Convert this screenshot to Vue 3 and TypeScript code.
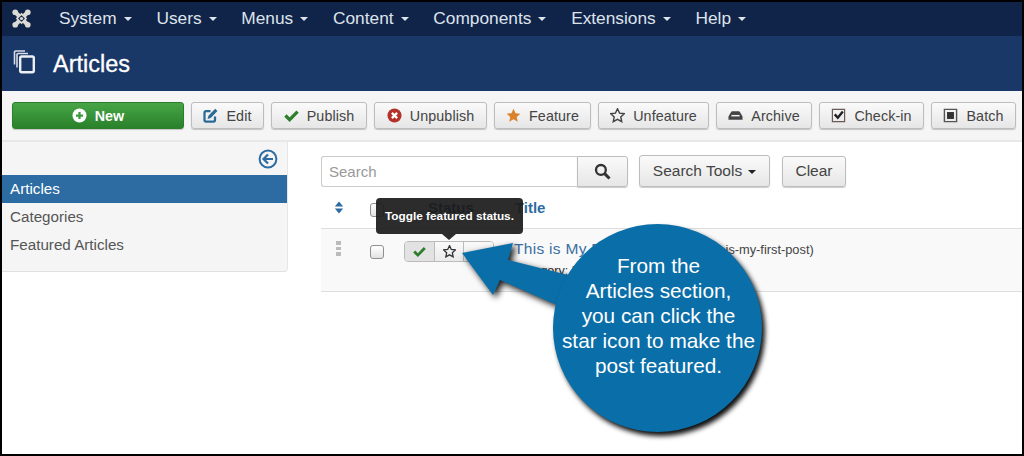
<script setup lang="ts">
interface Shape { d: string; fill?: string; stroke?: string; sw?: number }
interface Btn { label: string; w: number; cls?: string; shapes: Shape[] }

const menus: string[] = ['System', 'Users', 'Menus', 'Content', 'Components', 'Extensions', 'Help']

const star = 'M8 .8l2.2 4.7 5.1.6-3.8 3.5 1 5L8 12.1l-4.5 2.5 1-5L.7 6.1l5.1-.6z'

const buttons: Btn[] = [
  { label: 'New', w: 172, cls: 'primary', shapes: [
    { d: 'M8 .5a7.5 7.5 0 1 0 0 15A7.5 7.5 0 0 0 8 .5z', fill: '#fff' },
    { d: 'M8 4.2v7.6M4.2 8h7.6', stroke: '#3a9a3a', sw: 2.4 },
  ] },
  { label: 'Edit', w: 73, shapes: [
    { d: 'M8 3.2H3.2A1.6 1.6 0 0 0 1.6 4.8v8a1.6 1.6 0 0 0 1.6 1.6h8a1.6 1.6 0 0 0 1.6-1.6V9', stroke: '#2a6a96', sw: 2.4 },
    { d: 'M13 .8l2.4 2.4L8.2 10.6l-3.4 1 1-3.4z', fill: '#2a6a96' },
  ] },
  { label: 'Publish', w: 96, shapes: [
    { d: 'M1.5 8L6 12.5 14.5 3.8', stroke: '#2c7d2c', sw: 3.4 },
  ] },
  { label: 'Unpublish', w: 113, shapes: [
    { d: 'M8 .5a7.5 7.5 0 1 0 0 15A7.5 7.5 0 0 0 8 .5z', fill: '#b3312a' },
    { d: 'M5.2 5.2l5.6 5.6M10.8 5.2l-5.6 5.6', stroke: '#fff', sw: 2.4 },
  ] },
  { label: 'Feature', w: 97, shapes: [{ d: star, fill: '#d9822b' }] },
  { label: 'Unfeature', w: 111, shapes: [{ d: star, stroke: '#444', sw: 1.5, fill: 'none' }] },
  { label: 'Archive', w: 96, shapes: [
    { d: 'M5 3.5h6c1 0 1.5.4 2 1.2L15.5 9v3.5h-15V9L3 4.7c.5-.8 1-1.2 2-1.2z', fill: '#444' },
    { d: 'M3.6 8.2h8.8', stroke: '#efefef', sw: 1.6 },
  ] },
  { label: 'Check-in', w: 105, shapes: [
    { d: 'M1.5 1.5h13v13h-13z', stroke: '#6a5a55', sw: 1.3, fill: 'none' },
    { d: 'M4 6.8L7.3 10.4 12.6 3.8', stroke: '#222', sw: 2.6 },
  ] },
  { label: 'Batch', w: 85, shapes: [
    { d: 'M1.5 1.5h13v13h-13z', stroke: '#555', sw: 1.5, fill: 'none' },
    { d: 'M4.3 4.3h7.4v7.4H4.3z', fill: '#333' },
  ] },
]

const sideItems: string[] = ['Articles', 'Categories', 'Featured Articles']
</script>

<template>
  <div class="frame">
    <nav class="navbar">
      <svg class="logo" viewBox="0 0 20 20" aria-hidden="true">
        <path d="M4 4l12 12M16 4L4 16" stroke="#dcdad6" stroke-width="4.4" fill="none" />
        <path d="M10 5.2L14.8 10 10 14.8 5.2 10z" fill="#1d2c4c" stroke="#dcdad6" stroke-width="1.8" />
        <circle cx="10" cy="10" r="1.7" fill="#dcdad6" />
        <circle cx="3.4" cy="3.4" r="3" fill="#dcdad6" />
        <circle cx="16.6" cy="3.4" r="3" fill="#dcdad6" />
        <circle cx="3.4" cy="16.6" r="3" fill="#dcdad6" />
        <circle cx="16.6" cy="16.6" r="3" fill="#dcdad6" />
      </svg>
      <ul class="menu">
        <li v-for="m in menus" :key="m">{{ m }}<i class="caret"></i></li>
      </ul>
    </nav>

    <header class="subhead">
      <svg class="copy" viewBox="0 0 22 24" aria-hidden="true">
        <path d="M1.5 15V2.5a1 1 0 0 1 1-1H12" stroke="#d8dde6" stroke-width="1.6" fill="none" />
        <path d="M4 18V5a1 1 0 0 1 1-1h10" stroke="#d8dde6" stroke-width="1.6" fill="none" />
        <rect x="7.2" y="7" width="13.6" height="15.8" rx="1.5" stroke="#eceef2" stroke-width="2.4" fill="none" />
      </svg>
      <h1>Articles</h1>
    </header>

    <section class="toolbar">
      <button v-for="b in buttons" :key="b.label" class="btn" :class="b.cls" :style="{ width: b.w + 'px' }">
        <svg class="ic" viewBox="0 0 16 16" aria-hidden="true">
          <path
            v-for="(s, i) in b.shapes"
            :key="i"
            :d="s.d"
            :fill="s.fill ?? 'none'"
            :stroke="s.stroke ?? 'none'"
            :stroke-width="s.sw ?? 0"
          />
        </svg>
        {{ b.label }}
      </button>
    </section>

    <main class="main">
      <aside class="sidebar">
        <div class="collapse">
          <svg viewBox="0 0 20 20" width="20" height="20" aria-hidden="true">
            <circle cx="10" cy="10" r="8.4" stroke="#2d6ca2" stroke-width="2" fill="none" />
            <path d="M15 10H6M10 5.5L5.5 10l4.5 4.5" stroke="#2d6ca2" stroke-width="2.2" fill="none" />
          </svg>
        </div>
        <a v-for="(s, i) in sideItems" :key="s" class="side-item" :class="{ active: i === 0 }">{{ s }}</a>
      </aside>

      <div class="content">
        <div class="filters">
          <div class="search">
            <input class="search-input" placeholder="Search" />
            <button class="btn search-btn" aria-label="Search">
              <svg viewBox="0 0 16 16" width="17" height="17" aria-hidden="true">
                <circle cx="6.5" cy="6.5" r="4.6" stroke="#333" stroke-width="2.2" fill="none" />
                <path d="M10 10l4.6 4.6" stroke="#333" stroke-width="2.8" fill="none" />
              </svg>
            </button>
          </div>
          <button class="btn tools">Search Tools<i class="caret dark"></i></button>
          <button class="btn clear">Clear</button>
        </div>

        <div class="thead">
          <svg class="sort" viewBox="0 0 10 14" aria-hidden="true">
            <path d="M5 .5L9.5 6h-9zM5 13.5L.5 8h9z" fill="#2d6ca2" />
          </svg>
          <span class="check head-check"></span>
          <span class="th status">Status</span>
          <span class="th title">Title</span>
        </div>

        <div class="row">
          <span class="dots"><i></i><i></i><i></i></span>
          <span class="check"></span>
          <div class="group">
            <span class="seg on">
              <svg viewBox="0 0 16 16" width="13" height="13" aria-hidden="true">
                <path d="M1.5 8L6 12.5 14.5 3.8" stroke="#2c7d2c" stroke-width="3.4" fill="none" />
              </svg>
            </span>
            <span class="seg">
              <svg viewBox="0 0 16 16" width="13" height="13" aria-hidden="true">
                <path :d="star" stroke="#333" stroke-width="1.6" fill="none" />
              </svg>
            </span>
            <span class="seg"></span>
          </div>
          <div class="info">
            <div><a class="post">This is My First Post</a> <span class="alias">(Alias: this-is-my-first-post)</span></div>
            <div class="cat">Category: Uncategorised</div>
          </div>
        </div>
      </div>
    </main>

    <div class="tooltip">Toggle featured status.</div>

    <svg class="arrow" viewBox="0 0 150 100" aria-hidden="true">
      <path d="M2 13L53 3 48 20 140 43V84L40 40 33 55z" fill="#0a6ea8" />
    </svg>
    <div class="bubble">
      From the<br />Articles section,<br />you can click the<br />star icon to make the<br />post featured.
    </div>
  </div>
</template>

<style>
html, body { margin: 0; padding: 0; background: #fff; }
</style>

<style scoped>
* { box-sizing: border-box; }
.frame {
  position: relative;
  width: 1024px;
  height: 456px;
  overflow: hidden;
  border: 2px solid #000;
  background: #fff;
  font-family: "Liberation Sans", Arial, sans-serif;
  color: #333;
}
.navbar {
  height: 34px;
  display: flex;
  align-items: center;
  background: #10244a;
  color: #dfe3ea;
}
.logo { width: 19px; height: 19px; margin: -2px 0 0 10px; flex: none; }
.menu {
  list-style: none;
  display: flex;
  gap: 24.8px;
  margin: 0 0 0 28px;
  padding: 0 0 2px;
  font-size: 17.3px;
}
.menu li { display: flex; align-items: center; white-space: nowrap; }
.caret {
  display: inline-block;
  width: 0;
  height: 0;
  margin: 2px 0 0 7px;
  border-left: 4.5px solid transparent;
  border-right: 4.5px solid transparent;
  border-top: 4.5px solid currentColor;
}
.subhead {
  height: 55px;
  display: flex;
  align-items: center;
  background: #1a3867;
  color: #fff;
}
.copy { width: 22px; height: 25px; margin: -5px 0 0 11px; flex: none; }
.subhead h1 {
  margin: 2px 0 0 18px;
  font-size: 23.5px;
  font-weight: 400;
  -webkit-text-stroke: .3px #fff;
}
.toolbar {
  height: 51px;
  display: flex;
  gap: 7px;
  padding: 11px 0 0 10px;
  background: #f5f5f5;
  border-bottom: 2px solid #e8e8e8;
}
.btn {
  display: inline-flex;
  align-items: center;
  justify-content: center;
  flex: none;
  height: 27px;
  padding: 0;
  font: 14.3px "Liberation Sans", Arial, sans-serif;
  letter-spacing: .1px;
  color: #444;
  background: linear-gradient(#fafafa, #e6e6e6);
  border: 1px solid #bdbdbd;
  border-radius: 3px;
  box-shadow: 0 1px 1px rgba(0,0,0,.2);
  white-space: nowrap;
}
.ic { width: 15px; height: 15px; margin-right: 8px; flex: none; }
.primary {
  color: #fff;
  font-weight: 700;
  background: linear-gradient(#46a546, #2a812a);
  border-color: #2c7d2c;
}
.main { display: flex; align-items: flex-start; }
.sidebar {
  width: 286px;
  height: 130px;
  flex: none;
  background: #f5f5f5;
  border-right: 1px solid #e6e6e6;
  border-bottom: 1px solid #e0e0e0;
  border-bottom-right-radius: 4px;
}
.collapse { height: 33px; display: flex; justify-content: flex-end; align-items: center; padding: 0 9px 0 0; }
.side-item {
  display: flex;
  align-items: center;
  height: 28px;
  padding: 0 0 2px 8px;
  font-size: 15.2px;
  color: #555;
}
.active { background: #2d6ca2; color: #fff; }
.content { flex: 1; min-width: 0; padding: 13px 0 0 33px; }
.filters { display: flex; align-items: center; height: 32px; }
.search { display: flex; }
.search-input {
  width: 256px;
  height: 31px;
  padding: 0 7px;
  font: 15px "Liberation Sans", Arial, sans-serif;
  border: 1px solid #ccc;
  border-right: 0;
  border-radius: 3px 0 0 3px;
  outline: none;
}
.search-input::placeholder { color: #999; opacity: 1; }
.search-btn { width: 51px; height: 31px; border-radius: 0 3px 3px 0; }
.tools { width: 131px; height: 32px; margin-left: 11px; font-size: 15.5px; letter-spacing: 0; }
.caret.dark { margin-left: 6px; color: #222; }
.clear { width: 64px; height: 31px; margin-left: 12px; font-size: 15.5px; letter-spacing: 0; }
.thead {
  display: flex;
  align-items: center;
  height: 42px;
  border-bottom: 1px solid #ddd;
}
.sort { width: 10px; height: 13px; margin: 0 0 0 13px; flex: none; }
.check {
  width: 14px;
  height: 14px;
  flex: none;
  border: 1px solid #8f8f8f;
  border-radius: 3px;
  background: linear-gradient(#fff, #e2e2e2);
}
.head-check { margin-left: 26px; margin-top: 4px; }
.th { font-size: 15px; font-weight: 700; color: #2d6ca2; }
.status { margin-left: 44px; color: #1c3f68; }
.title { margin-left: 41px; }
.row {
  display: flex;
  height: 63px;
  background: #f9f9f9;
  border-bottom: 1px solid #ddd;
}
.dots { display: flex; flex-direction: column; gap: 2px; margin: 12px 0 0 15px; width: 5px; flex: none; }
.dots i { display: block; width: 5px; height: 3.5px; background: #bbb; }
.row .check { margin: 16px 0 0 29px; }
.group {
  display: flex;
  width: 90px;
  height: 21px;
  margin: 12px 0 0 20px;
  border: 1px solid #bbb;
  border-radius: 4px;
  overflow: hidden;
  flex: none;
}
.seg {
  flex: 1;
  display: flex;
  align-items: center;
  justify-content: center;
  background: linear-gradient(#fafafa, #eaeaea);
  border-left: 1px solid #bbb;
}
.seg:first-child { border-left: 0; }
.seg.on { background: #e2e2e2; }
.info { margin: 11px 0 0 20px; white-space: nowrap; }
.post { font-size: 15.5px; color: #3a6f9f; letter-spacing: .3px; }
.alias { margin-left: -2px; font-size: 12.8px; color: #444; }
.cat { margin: 6px 0 0; font-size: 12.5px; color: #333; }
.tooltip {
  position: absolute;
  left: 374px;
  top: 196px;
  width: 147px;
  height: 36px;
  display: flex;
  align-items: center;
  justify-content: center;
  background: rgba(28, 28, 28, .93);
  color: #fff;
  font-size: 11.8px;
  font-weight: 700;
  border-radius: 4px;
}
.tooltip::after {
  content: "";
  position: absolute;
  left: 66px;
  top: 36px;
  border-left: 7px solid transparent;
  border-right: 7px solid transparent;
  border-top: 6px solid rgba(28, 28, 28, .93);
}
.arrow {
  position: absolute;
  left: 458px;
  top: 238px;
  width: 150px;
  height: 100px;
  overflow: visible;
  filter: drop-shadow(3px 3px 3px rgba(0,0,0,.9));
}
.bubble {
  position: absolute;
  left: 551px;
  top: 222px;
  width: 209px;
  height: 208px;
  padding: 29px 0 0 2px;
  border-radius: 50%;
  background: #0a6ea8;
  box-shadow: 3px 4px 5px rgba(0,0,0,.95);
  color: #fff;
  font-size: 20.8px;
  line-height: 25px;
  text-align: center;
  white-space: nowrap;
}
</style>
